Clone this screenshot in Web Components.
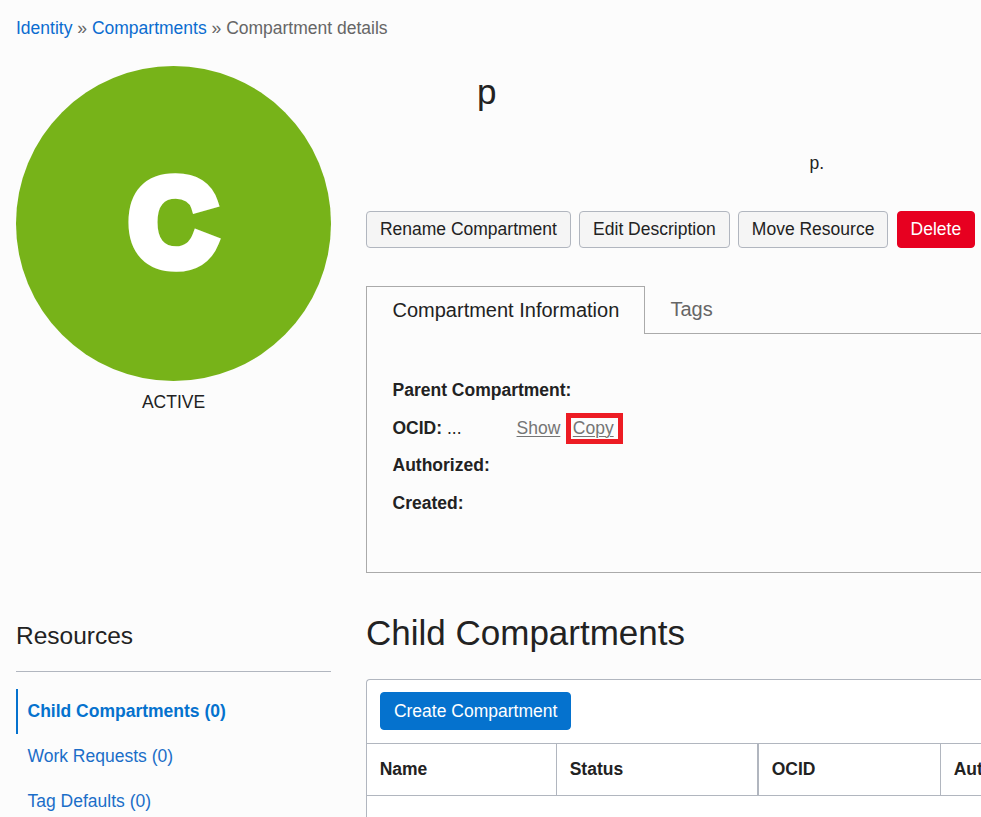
<!DOCTYPE html>
<html lang="en">
<head>
<meta charset="utf-8">
<title>Compartment details</title>
<style>
html, body { height: 817px; overflow: hidden; }
body { margin: 0; background: #fcfcfc; color: #222; font: 17.5px/25px "Liberation Sans", Arial, sans-serif; }
</style>
</head>
<body>
<compartment-page></compartment-page>
<script>
const define = (name, html) => {
  const template = document.createElement('template');
  template.innerHTML = html;
  customElements.define(name, class extends HTMLElement {
    constructor() {
      super();
      this.attachShadow({ mode: 'open' }).append(template.content.cloneNode(true));
    }
  });
};

define('nav-crumbs', `<style>
:host { display: block; height: 25px; color: #666; white-space: nowrap; }
::slotted(a) { color: #0b6cd0; }
</style><slot></slot>`);

define('status-badge', `<style>
:host { display: flex; flex-direction: column; align-items: center; width: 315px; }
.disc { width: 315px; height: 315px; border-radius: 50%; background: #77b319; display: flex; align-items: center; justify-content: center; }
.letter { font-weight: bold; font-size: 121px; line-height: 121px; color: #fff; -webkit-text-stroke: 11.5px #fff; transform: translate(-.5px, -.2px) scale(1, 1.01); }
.state { margin-top: 9px; }
</style><div class="disc"><span class="letter"><slot name="letter"></slot></span></div><div class="state"><slot></slot></div>`);

define('action-button', `<style>
:host { display: block; box-sizing: border-box; height: 37px; padding: 0 12.9px; border: 1px solid #b1b6bf; border-radius: 4px; background: #f5f5f5; line-height: 35px; white-space: nowrap; text-align: center; }
:host([kind=danger]) { background: #e70020; border-color: #e70020; color: #fff; }
:host([kind=primary]) { background: #0572ce; border-color: #0572ce; color: #fff; height: 38px; line-height: 36px; }
</style><slot></slot>`);

define('tab-panel', `<style>
:host { display: block; height: 287px; }
.tabs { display: flex; height: 48px; font-size: 20px; line-height: 24px; }
.active { box-sizing: border-box; width: 279px; padding: 11px 0 0 25.5px; border: 1px solid #aaa; border-bottom: 0; white-space: nowrap; }
.other { flex: 1; box-sizing: border-box; height: 48px; padding: 11px 0 0 25.5px; border-bottom: 1px solid #aaa; color: #666; }
.body { box-sizing: border-box; height: 239px; padding: 44px 0 0 25.5px; border: solid #aaa; border-width: 0 0 1px 1px; }
</style><div class="tabs"><div class="active"><slot name="active"></slot></div><div class="other"><slot name="tab"></slot></div></div><div class="body"><slot></slot></div>`);

define('info-row', `<style>
:host { display: flex; height: 37.6px; line-height: 25px; white-space: pre; }
b { font-weight: bold; }
</style><b><slot name="label"></slot></b><slot></slot>`);

define('text-link', `<style>
:host { display: block; color: #757575; text-decoration: underline; text-underline-offset: 2px; text-decoration-thickness: 1px; }
:host([marked]) { box-sizing: border-box; width: 57px; height: 31px; margin: -3px 0 0 5.5px; padding: 0 0 0 2px; border: 5px solid #ed1c24; line-height: 21px; }
</style><slot></slot>`);

define('resource-list', `<style>
:host { display: block; width: 315px; }
h2 { margin: 0; height: 48px; padding-top: 1px; font-size: 24.5px; line-height: 26px; font-weight: normal; border-bottom: 1px solid #b1b6bf; }
nav { padding-top: 17px; }
</style><h2><slot name="title"></slot></h2><nav><slot></slot></nav>`);

define('resource-item', `<style>
:host { display: block; height: 45px; padding-left: 11.5px; line-height: 44px; color: #1b6ec8; }
:host([current]) { padding-left: 9.5px; border-left: 2px solid #0572ce; color: #0572ce; font-weight: bold; }
</style><slot></slot>`);

define('data-table', `<style>
:host { display: block; box-sizing: border-box; height: 145px; border: 1px solid #b1b6bf; border-right: 0; border-bottom: 0; border-radius: 4px 0 0 0; background: #fff; overflow: hidden; }
.tools { display: flex; height: 63px; padding: 12px 13px 0; box-sizing: border-box; }
.head { display: grid; grid-template-columns: 190px 202px 182px 60px; height: 51px; border: solid #b1b6bf; border-width: 1px 0; }
</style><div class="tools"><slot name="tools"></slot></div><div class="head"><slot></slot></div>`);

define('head-cell', `<style>
:host { display: block; box-sizing: border-box; padding-left: 12.7px; line-height: 50px; font-weight: bold; border-right: 1px solid #b1b6bf; white-space: nowrap; }
:host([wide]) { border-right-width: 2px; }
:host(:last-child) { border: 0; }
</style><slot></slot>`);

define('compartment-page', `<style>
:host { display: flex; flex-direction: column; height: 817px; overflow: hidden; padding: 16px 0 0 16px; box-sizing: border-box; }
.columns { display: flex; gap: 35px; margin-top: 25px; }
aside { width: 315px; flex: none; }
main { flex: 1; min-width: 0; }
resource-list { margin-top: 207px; }
h1, h2 { margin: 0; font-size: 35px; line-height: 42px; font-weight: normal; }
h1 { padding-left: 111px; margin-top: 5px; }
.description { margin: 38px 0 0; padding-left: 443.5px; }
.actions { display: flex; gap: 8.4px; margin-top: 35px; }
tab-panel { margin-top: 38px; }
h2 { margin-top: 39px; white-space: nowrap; }
data-table { margin-top: 25px; }
.show { margin-left: 55px; }
</style>
<nav-crumbs><a>Identity</a> » <a>Compartments</a> » Compartment details</nav-crumbs>
<div class="columns">
<aside>
<status-badge><span slot="letter">C</span>ACTIVE</status-badge>
<resource-list><span slot="title">Resources</span><resource-item current>Child Compartments (0)</resource-item><resource-item>Work Requests (0)</resource-item><resource-item>Tag Defaults (0)</resource-item></resource-list>
</aside>
<main>
<h1>p</h1>
<p class="description">p.</p>
<div class="actions"><action-button>Rename Compartment</action-button><action-button>Edit Description</action-button><action-button>Move Resource</action-button><action-button kind="danger">Delete</action-button></div>
<tab-panel><span slot="active">Compartment Information</span><span slot="tab">Tags</span><info-row><span slot="label">Parent Compartment:</span></info-row><info-row><span slot="label">OCID:</span> ...<text-link class="show">Show</text-link><text-link marked>Copy</text-link></info-row><info-row><span slot="label">Authorized:</span></info-row><info-row><span slot="label">Created:</span></info-row></tab-panel>
<h2>Child Compartments</h2>
<data-table><action-button slot="tools" kind="primary">Create Compartment</action-button><head-cell>Name</head-cell><head-cell wide>Status</head-cell><head-cell>OCID</head-cell><head-cell>Authorized</head-cell></data-table>
</main>
</div>`);
</script>
</body>
</html>
